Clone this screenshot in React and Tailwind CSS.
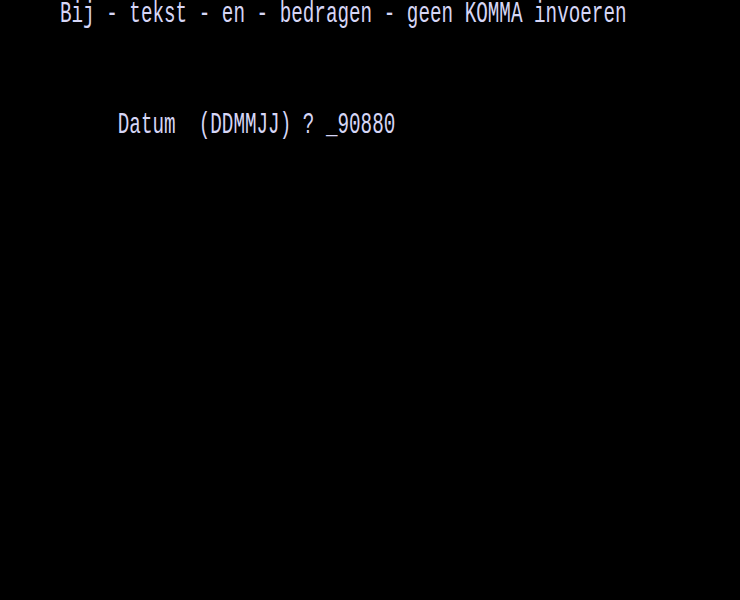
import React from 'react';

const lineCls = "whitespace-pre text-[19.27px] leading-[19.27px] origin-top-left scale-y-150 text-[#d6d6f6]";

export default function App() {
  return (
    <div className="w-[740px] h-[600px] bg-black pl-[60px] pt-[1px]" style={{ fontFamily: '"Liberation Mono", monospace' }}>
      <div className={lineCls}>Bij - tekst - en - bedragen - geen KOMMA invoeren</div>
      <div className={`${lineCls} mt-[91.5px]`}>{"     Datum  (DDMMJJ) ? _90880"}</div>
    </div>
  );
}
